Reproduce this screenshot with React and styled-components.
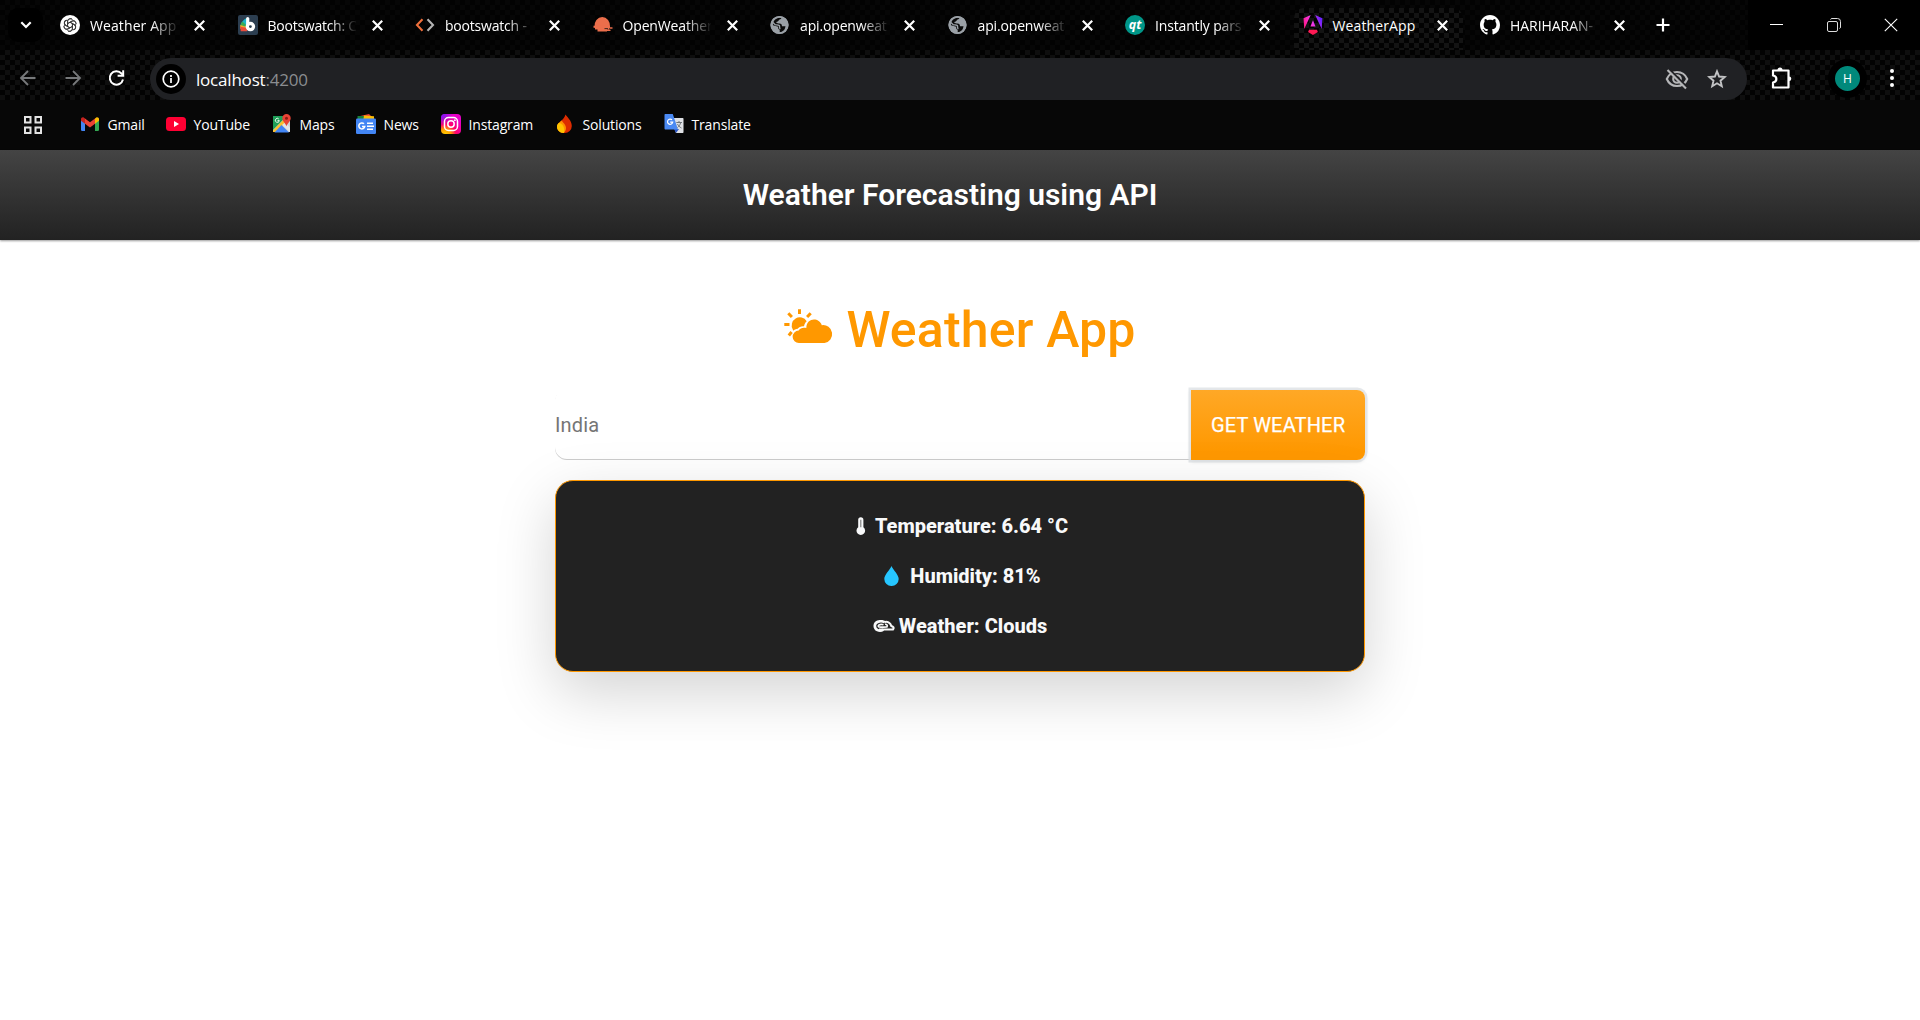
import React from "react";
import styled, { createGlobalStyle, css } from "styled-components";

const Global = createGlobalStyle`
  * { box-sizing: border-box; }
  html, body { margin: 0; padding: 0; background: #fff; }
  body { font-family: Roboto, "Liberation Sans", sans-serif; overflow: hidden; }
`;

const uiFont = css`
  font-family: "Open Sans", "Noto Sans", sans-serif;
`;

const Page = styled.div`
  width: 1920px;
  height: 1020px;
  display: flex;
  flex-direction: column;
  background: #fff;
  overflow: hidden;
`;

const Chrome = styled.header`
  ${uiFont}
  flex: none;
  height: 150px;
  display: flex;
  flex-direction: column;
  background: #070707;
  color: #fff;
`;

const weave = (tone) => css`
  background-color: #020202;
  background-image: conic-gradient(${tone} 25%, transparent 0 50%, ${tone} 0 75%, transparent 0);
  background-size: 10px 10px;
`;

const TabStrip = styled.div`
  height: 50px;
  display: flex;
  align-items: stretch;
  padding-left: 8px;
  ${weave("#060606")}
`;

const TabSearch = styled.div`
  width: 35px;
  height: 34px;
  margin-top: 8px;
  border-radius: 10px;
  background: #000;
  display: flex;
  align-items: center;
  justify-content: center;
`;

const Tabs = styled.div`
  display: flex;
  margin-left: 5px;
  padding-top: 8px;
`;

const Tab = styled.div`
  width: 177.5px;
  height: 42px;
  padding: 0 12px 8px;
  display: flex;
  align-items: center;
  border-radius: 10px 10px 0 0;
  ${(p) => p.$active && css`
    ${weave("#131313")}
    width: 169.5px;
    margin: 0 5px 0 3px;
    padding: 0 9px 8px;
  `}
`;

const Favicon = styled.span`
  flex: none;
  width: 20px;
  height: 20px;
  display: flex;
  svg { width: 20px; height: 20px; display: block; overflow: visible; }
`;

const TabTitle = styled.span`
  flex: none;
  width: 88px;
  margin-left: 10px;
  padding-top: 1px;
  white-space: nowrap;
  font-size: 14px;
  line-height: 20px;
  letter-spacing: ${(p) => p.$track}px;
  ${(p) => p.$fade && css`
    mask-image: linear-gradient(90deg, #000 70%, transparent 102%);
  `}
`;

const CloseMark = styled.span`
  display: flex;
  margin-left: 16px;
`;

const NewTab = styled.div`
  width: 36px;
  margin-left: -1px;
  display: flex;
  align-items: center;
  justify-content: center;
`;

const WindowControls = styled.div`
  margin-left: auto;
  padding-right: 1px;
  display: flex;
  background: #000;
`;

const WindowButton = styled.div`
  width: 57px;
  display: flex;
  align-items: center;
  justify-content: center;
`;

const Toolbar = styled.div`
  height: 50px;
  display: flex;
  align-items: center;
  ${weave("#0e0e0e")}
`;

const NavButtons = styled.div`
  width: 150px;
  padding: 6px 0 0 18px;
  display: flex;
  gap: 24.5px;
`;

const AddressBar = styled.div`
  width: 1597px;
  height: 42px;
  margin-top: 8px;
  padding: 0 20px 0 6px;
  border-radius: 21px;
  background: #202124;
  display: flex;
  align-items: center;
  gap: 18px;
`;

const InfoBadge = styled.div`
  width: 30px;
  height: 30px;
  margin-right: -8px;
  border-radius: 50%;
  background: #000;
  display: flex;
  align-items: center;
  justify-content: center;
`;

const Url = styled.span`
  flex: 1;
  font-size: 17px;
  letter-spacing: -0.2px;
  span { color: #8b8d90; }
`;

const ToolbarActions = styled.div`
  flex: 1;
  padding: 6px 16px 0 23px;
  display: flex;
  align-items: center;
`;

const Avatar = styled.div`
  width: 39px;
  height: 39px;
  margin: 0 13px 0 36px;
  border-radius: 50%;
  border: 7px solid #000;
  background: #00897b;
  color: #fff;
  font-size: 12px;
  display: flex;
  align-items: center;
  justify-content: center;
`;

const Bookmarks = styled.nav`
  height: 50px;
  padding: 0 0 2px 22.5px;
  display: flex;
  align-items: center;
`;

const AppsButton = styled.div`
  width: 57px;
  padding-top: 2px;
  display: flex;
`;

const Bookmark = styled.div`
  width: ${(p) => p.$w}px;
  display: flex;
  align-items: center;
  gap: 8px;
  font-size: 14px;
  letter-spacing: -0.16px;
  white-space: nowrap;
`;

const Navbar = styled.div`
  flex: none;
  height: 90px;
  padding: 0 20px 2px 0;
  display: flex;
  align-items: center;
  justify-content: center;
  background: linear-gradient(#444, #222);
  box-shadow: 0 1px 2px rgba(0, 0, 0, 0.4);
  color: #fff;
  font-size: 30px;
  font-weight: 600;
`;

const Main = styled.main`
  width: 810px;
  margin: 60px auto 0;
  display: flex;
  flex-direction: column;
`;

const Heading = styled.h1`
  margin: 0;
  height: 60px;
  display: flex;
  align-items: center;
  justify-content: center;
  gap: 12px;
  color: #ff9800;
  font-size: 50px;
  font-weight: 500;
  letter-spacing: 0.18px;
  svg { margin-bottom: 7px; }
`;

const SearchRow = styled.div`
  margin-top: 30px;
  height: 70px;
  display: flex;
`;

const CityInput = styled.input`
  flex: 1;
  min-width: 0;
  padding: 0;
  border: 0;
  border-radius: 12px 0 0 12px;
  background: transparent;
  box-shadow: inset 0 -1px 0 #ccc;
  font: 400 20px Roboto, sans-serif;
  letter-spacing: 0.15px;
  color: #666;
  outline: none;
  &::placeholder { color: #757575; opacity: 1; }
`;

const WeatherButton = styled.button`
  width: 174px;
  border: 0;
  padding: 0;
  border-radius: 0 8px 8px 0;
  background: linear-gradient(#ffa826, #ff9800 90%);
  box-shadow: 0 0 0 2.5px rgba(222, 226, 230, 0.8), 0 1px 4px rgba(0, 0, 0, 0.2);
  color: #fff;
  font: 400 20px Roboto, sans-serif;
  letter-spacing: 0.16px;
  -webkit-text-stroke: 0.25px #fff;
`;

const ResultCard = styled.section`
  height: 192px;
  margin-top: 20px;
  padding: 20px;
  border: 1px solid #ff9800;
  border-radius: 18px;
  background: #222;
  box-shadow: 0 20px 60px rgba(0, 0, 0, 0.175);
  color: #f8f9fa;
`;

const Reading = styled.p`
  margin: 0;
  height: 50px;
  padding-left: ${(p) => p.$indent || 0}px;
  display: flex;
  align-items: center;
  justify-content: center;
  gap: ${(p) => p.$gap}px;
  font-size: 20px;
  font-weight: 800;
`;

const CrossIcon = ({ size = 11, width = 2.2 }) => (
  <svg width={size} height={size} viewBox={`0 0 ${size} ${size}`} stroke="#fff" strokeWidth={width}>
    <path d={`M.8 .8L${size - 0.8} ${size - 0.8}M${size - 0.8} .8L.8 ${size - 0.8}`} />
  </svg>
);

const OpenAiIcon = () => (
  <svg viewBox="0 0 20 20" fill="none" stroke="#333" strokeWidth=".9">
    <circle cx="10" cy="10" r="10" fill="#fff" stroke="none" />
    {[0, 60, 120, 180, 240, 300].map((a) => (
      <path key={a} transform={`rotate(${a} 10 10)`} d="M7.6 11.4V6.4c0-3.1 4.2-3.7 5.2-1.1M7.6 8.6l4.2-2.4c1.9-1 4.2.3 4.3 2.4" />
    ))}
  </svg>
);

const BootswatchIcon = () => (
  <svg viewBox="0 0 20 20">
    <rect width="20" height="20" rx="2" fill="#2c3e50" />
    <path d="M9 3v11L2.500 10.500C3.500 6.500 6 4 9 3z" fill="#1cb5c9" />
    <path d="M4.500 6.500l5 5-7.200-.5c.3-1.700 1-3.200 2.200-4.500z" fill="#3aaa55" />
    <path d="M2.300 10l7.500 2.200-4 2.500-3.600-1.200z" fill="#f5a623" />
    <path d="M2.200 11.800L10 13l-1 3.200H2.800z" fill="#e74c3c" />
    <path d="M9.700 3.500v8.500" stroke="#fff" strokeWidth="3.200" strokeLinecap="round" />
    <circle cx="12.400" cy="11.600" r="3.100" fill="#2c3e50" stroke="#fff" strokeWidth="3.300" />
  </svg>
);

const CodeIcon = () => (
  <svg viewBox="0 0 20 20" fill="none" strokeWidth="2.1">
    <path d="M7.500 4.300L2 10l5.500 5.700" stroke="#f0703c" />
    <path d="M12.500 4.300L18 10l-5.500 5.700" stroke="#b4b4b4" />
  </svg>
);

const OpenWeatherIcon = () => (
  <svg viewBox="0 0 20 20" fill="#eb6e4b">
    <path d="M1.500 11.800a7.800 8.800 0 1 1 15.500 0v1H1.500z" />
    <path d="M.500 10.800h16.500v2H.500zM2 12.500h14.500v2H2zM4.500 14.200h9.500v2.300H4.500zM17 12.300h2.500v1.500H17zM13 14.800h4.500v1.200H13z" />
    <path d="M11.500 13.600h3.500" stroke="#111" strokeWidth=".8" />
  </svg>
);

const GlobeIcon = () => (
  <svg viewBox="0 0 20 20">
    <circle cx="9.500" cy="10" r="9" fill="#9aa0a6" />
    <path d="M11.500 2.500c-.2 1.500-1.200 2-2.500 2.300-.5 1.500-1.300 2-2.800 2.300.2 1.400 1.400 1.300 3 1.300 2.500 0 2.500 1 2.800 2.800h3.500c-.5 3-1.500 4.300-3.500 5.500l-2.300.8v-2.800c-1.500-.5-1.600-1.200-1.500-2.900L3 10.200c-.5-3.600 2.500-8 8.500-7.700z" fill="#0a0a0a" />
    <path d="M2.600 7.200l2.600 2.500c1.400.4 3.200-.2 4.100.8.7.9-.3 2.700 1.100 3.400" fill="none" stroke="#9aa0a6" strokeWidth="1.400" />
    <circle cx="9.500" cy="10" r="8.200" fill="none" stroke="#9aa0a6" strokeWidth="1.800" />
  </svg>
);

const QtIcon = () => (
  <svg viewBox="0 0 20 20">
    <circle cx="10" cy="10" r="10" fill="#009688" />
    <text x="10" y="13.800" textAnchor="middle" fill="#fff" fontFamily="Open Sans, sans-serif" fontStyle="italic" fontWeight="700" fontSize="12.500">qt</text>
  </svg>
);

const AngularIcon = () => (
  <svg viewBox="0 0 223 236">
    <defs>
      <linearGradient id="ngBody" gradientUnits="userSpaceOnUse" x1="20" y1="150" x2="215" y2="70">
        <stop offset="0" stopColor="#ff1a8c" />
        <stop offset=".45" stopColor="#f637e3" />
        <stop offset="1" stopColor="#6a22ff" />
      </linearGradient>
    </defs>
    <path d="m222.077 39.192-8.019 125.923L137.387 0zM111.039 62.675l30.357 73.803H80.681zM7.937 165.115 0 39.192 84.690 0z" fill="url(#ngBody)" />
    <path d="m168.972 202.017-57.933 33.056-57.934-33.056 11.783-28.556h92.301z" fill="#ff1a55" />
  </svg>
);

const GithubIcon = () => (
  <svg viewBox="0 0 16 16" fill="#fff">
    <path d="M8 0C3.580 0 0 3.580 0 8c0 3.540 2.290 6.530 5.470 7.590.4.07.55-.17.55-.38 0-.19-.01-.82-.01-1.490-2.010.37-2.530-.49-2.690-.94-.09-.23-.48-.94-.82-1.130-.28-.15-.68-.52-.01-.53.63-.01 1.080.58 1.230.82.72 1.210 1.870.87 2.330.66.07-.52.28-.87.51-1.070-1.780-.2-3.640-.89-3.640-3.950 0-.87.31-1.590.82-2.150-.08-.2-.36-1.020.08-2.120 0 0 .67-.21 2.200.82.64-.18 1.320-.27 2-.27s1.360.09 2 .27c1.530-1.040 2.200-.82 2.200-.82.44 1.100.16 1.920.08 2.120.51.56.82 1.270.82 2.150 0 3.070-1.870 3.750-3.650 3.950.29.25.54.73.54 1.480 0 1.070-.01 1.930-.01 2.200 0 .21.15.46.55.38A8.010 8.010 0 0 0 16 8c0-4.420-3.580-8-8-8z" />
  </svg>
);

const ArrowIcon = ({ flip }) => (
  <svg width="20" height="20" viewBox="0 0 20 20" fill="none" stroke="#77797b" strokeWidth="1.800" transform={flip ? "scale(-1 1)" : undefined}>
    <path d="M17.500 10H3.500M10 3L3 10l7 7" />
  </svg>
);

const ReloadIcon = () => (
  <svg width="20" height="20" viewBox="0 0 20 20" fill="none" stroke="#fff" strokeWidth="2">
    <path d="M16 11.500A6.700 6.700 0 1 1 14.500 5.500L16 7.200" />
    <path d="M16.200 2.200v5.600h-5.600" />
  </svg>
);

const InfoIcon = () => (
  <svg width="18" height="18" viewBox="0 0 18 18" fill="none" stroke="#fff" strokeWidth="1.700">
    <circle cx="9" cy="9" r="7.800" />
    <path d="M9 8v5M9 5v1.900" />
  </svg>
);

const EyeOffIcon = () => (
  <svg width="24" height="24" viewBox="0 0 24 24" fill="none" stroke="#b5b6b8" strokeWidth="2.100">
    <path d="M1.800 12C3.800 7.300 7.700 5 12 5s8.200 2.300 10.200 7c-2 4.700-5.900 7-10.200 7S3.800 16.700 1.800 12z" />
    <circle cx="12" cy="12" r="3.800" />
    <path d="M4.500 2.500l17 17" stroke="#202124" strokeWidth="2" />
    <path d="M2.500 3L21 21.500" />
  </svg>
);

const StarIcon = () => (
  <svg width="20" height="20" viewBox="0 0 20 20" fill="none" stroke="#c2c3c5" strokeWidth="1.900">
    <path d="M10 2.300l2.100 5.200 5.700.5-4.300 3.700 1.300 5.500-4.800-2.900-4.800 2.900 1.300-5.500L2.200 8l5.700-.5z" />
  </svg>
);

const PuzzleIcon = () => (
  <svg width="22" height="24" viewBox="0 0 22 24" fill="none" stroke="#fff" strokeWidth="2.200" strokeLinejoin="round">
    <path d="M3 4.500h15.500v17H3v-5c4.500-.8 4.500-6.200 0-7z" />
    <path d="M7.500 4a2.500 2.500 0 0 1 5 0zM19 10.500a2.300 2.300 0 0 1 0 4.600z" fill="#fff" stroke="none" />
  </svg>
);

const AppsIcon = () => (
  <svg width="20" height="20" viewBox="0 0 20 20" fill="none" stroke="#e3e3e3" strokeWidth="2">
    <path d="M2 2h5.500v5.500H2zM12.500 2H18v5.500h-5.500zM2 12.500h5.500V18H2zM12.500 12.500H18V18h-5.500z" />
  </svg>
);

const GmailIcon = () => (
  <svg viewBox="0 0 20 20">
    <path d="M1 5.500l4 3V17H2.300A1.300 1.300 0 0 1 1 15.700z" fill="#4285f4" />
    <path d="M19 5.500l-4 3V17h2.700a1.300 1.300 0 0 0 1.300-1.300z" fill="#34a853" />
    <path d="M15 4.500l1-.8c1.300-1 3-.1 3 1.400v1.600l-4 3z" fill="#fbbc04" />
    <path d="M5 4.500l-1-.8C2.700 2.700 1 3.600 1 5.100v1.600l4 3z" fill="#c5221f" />
    <path d="M5 4.500l5 3.800 5-3.800v5.200l-5 3.800-5-3.800z" fill="#ea4335" />
  </svg>
);

const YoutubeIcon = () => (
  <svg viewBox="0 0 20 20">
    <rect y="3" width="20" height="14" rx="3.500" fill="#ff0033" />
    <path d="M8 7l5 3-5 3z" fill="#fff" />
  </svg>
);

const MapsIcon = () => (
  <svg viewBox="0 0 20 20">
    <path d="M1 2h17v16H1z" fill="#cfd2d6" />
    <path d="M1 2h14L1 16z" fill="#1e9e57" />
    <path d="M1 16.500L14 3l3 3L4.500 18H1z" fill="#fbc02d" />
    <path d="M2.500 18.500L9.500 11l7.500 7.500z" fill="#4285f4" />
    <path d="M10 11l3-2.500 5 5V18z" fill="#e3e5e8" />
    <path d="M6.800 5a2 2 0 1 0 .5 1.600H5.500" fill="none" stroke="#fff" strokeWidth=".9" />
    <path d="M14.500 0a4.200 4.200 0 0 1 4.200 4.200c0 3-3 4.500-4.200 8-1.200-3.500-4.200-5-4.200-8A4.200 4.200 0 0 1 14.500 0z" fill="#e94335" />
    <circle cx="14.500" cy="4.300" r="1.500" fill="#8c1a12" />
  </svg>
);

const NewsIcon = () => (
  <svg viewBox="0 0 20 20">
    <path d="M2 2.500L13 0l4 4v3H2z" fill="#ea4335" />
    <path d="M1.500 2h8L8 7H1.500z" fill="#188038" />
    <path d="M8 1.500l10 .8V8H7z" fill="#fbbc04" />
    <rect y="4.500" width="20" height="15.500" rx="1.200" fill="#4285f4" />
    <path d="M8 9.800a3 3 0 1 0 .8 2.600H6" fill="none" stroke="#fff" strokeWidth="1.500" />
    <path d="M11 9.200h6M11 12.200h7M11 15.200h6" stroke="#fff" strokeWidth="1.600" />
  </svg>
);

const InstagramIcon = () => (
  <svg viewBox="0 0 20 20" fill="none" stroke="#fff" strokeWidth="1.500">
    <defs>
      <radialGradient id="igWarm" cx=".2" cy="1.050" r="1">
        <stop offset="0" stopColor="#ffd600" />
        <stop offset=".3" stopColor="#ff9d00" />
        <stop offset=".55" stopColor="#ff0169" />
        <stop offset="1" stopColor="#e900c8" />
      </radialGradient>
      <radialGradient id="igCool" cx="0" cy="0" r=".6">
        <stop offset="0" stopColor="#6a1bff" />
        <stop offset="1" stopColor="#6a1bff" stopOpacity="0" />
      </radialGradient>
    </defs>
    <rect width="20" height="20" rx="4" fill="url(#igWarm)" stroke="none" />
    <rect width="20" height="20" rx="4" fill="url(#igCool)" stroke="none" />
    <rect x="3.500" y="3.500" width="13" height="13" rx="4" />
    <circle cx="10" cy="10" r="3.200" />
    <circle cx="13.900" cy="6.200" r=".9" fill="#fff" stroke="none" />
  </svg>
);

const SolutionsIcon = () => (
  <svg viewBox="0 0 20 20">
    <path d="M10.500.500c1.500 2.500 6.300 6 6.300 11.500A7 7 0 0 1 9.500 19C5 19 2 16 2.300 12 2.600 8.500 9 6 10.500.500z" fill="#dd2c00" />
    <path d="M6.500 6.500c1.500 2.200 4.500 4 4.500 7.500 0 2.300-1 4-2.500 5C4.500 18.800 2 16 2 12.500 2 10 4.500 8.900 6.500 6.500z" fill="#ff9100" />
    <path d="M4 8.800c3.500 1.200 6 4 5 10.200-4.500-.2-7-3-7-6.500 0-1.500.8-2.600 2-3.700z" fill="#ffc400" />
  </svg>
);

const TranslateIcon = () => (
  <svg viewBox="0 0 20 20">
    <path d="M7 4h11.500c.6 0 1 .4 1 1v13c0 .6-.4 1-1 1H12z" fill="#dfe1e5" />
    <path d="M10 15h5l-3 4z" fill="#2a56c6" />
    <path d="M1.500 0h7.300L14 15.500H1.500C.9 15.500.5 15 .5 14.500V1c0-.6.4-1 1-1z" fill="#4a89f3" />
    <path d="M8 5.900a2.600 2.600 0 1 0 .7 2.200H6.200" fill="none" stroke="#fff" strokeWidth="1.200" />
    <path d="M12.300 8.500H18M15 7v1.500M16.700 8.500c-.5 2.500-2 4-3.200 5M13.500 10c.8 1.700 2 3 4 4" fill="none" stroke="#70757a" strokeWidth="1" />
  </svg>
);

const SunCloudIcon = () => (
  <svg width="50" height="36" viewBox="0 0 50 36" fill="#ff9800">
    <g stroke="#ff9800" strokeWidth="3">
      <path d="M15.500 .300v4.700M4.300 4.300l3.600 3.700M26.700 4.300l-3.600 3.700M.300 15.500h5.200M4.800 26.500l2.800-3.500" />
    </g>
    <path d="M8.800 20.500A7.800 7.800 0 1 1 22.700 12.300C21.200 13.700 20.400 15.200 20 17.300c-3-.3-5 .8-6.300 2.500-2 .2-3.500.9-4.500 2z" />
    <path d="M15 34a6.200 6.200 0 0 1-.3-12.400c1.500-2.600 4-3.200 7.600-2.600.2-10.500 12.700-10.900 15.500-2.800a9 9 0 1 1 2.700 17.800z" />
  </svg>
);

const ThermometerIcon = () => (
  <svg width="10" height="18" viewBox="0 0 10 18">
    <path d="M2.200 2.800a2.600 2.600 0 0 1 5.200 0v7.400a4.300 4.300 0 1 1-5.200 0z" fill="#f8f9fa" />
    <path d="M4.800 2.800v7.500" stroke="#777" strokeWidth="1.100" />
  </svg>
);

const DropIcon = () => (
  <svg width="15" height="20" viewBox="0 0 15 20">
    <path d="M7.500 0C9 4 14.700 8.500 14.700 13A7.100 7.100 0 0 1 7.500 20 7.100 7.100 0 0 1 .3 13C.3 8.500 6 4 7.500 0z" fill="#26c6ff" />
  </svg>
);

const BreezeIcon = () => (
  <svg width="22" height="13" viewBox="0 0 22 13" fill="none" stroke="#f8f9fa" strokeWidth="1.700">
    <path d="M6 9.500h14c1.300-1.800.300-3-1.700-3.600C17.500 2.500 14 1 11.200 2.200" strokeWidth="2.100" />
    <path d="M11.500 2.200C8 .2 2 1.500 1.800 5.700c0 4 4.500 6.500 8.500 4" strokeWidth="2.700" />
    <path d="M10.500 4.800C8 4 5.500 4.700 5.300 6c0 1.500 3.500 1.200 8.700.8.800-1.800-.5-2.800-2-2.500" />
  </svg>
);

const TABS = [
  { title: "Weather App", icon: <OpenAiIcon />, track: 0.1, fade: true },
  { title: "Bootswatch: C", icon: <BootswatchIcon />, track: -0.25, fade: true },
  { title: "bootswatch - ", icon: <CodeIcon />, track: -0.2, fade: true },
  { title: "OpenWeather", icon: <OpenWeatherIcon />, track: -0.15, fade: true },
  { title: "api.openweat", icon: <GlobeIcon />, track: -0.15, fade: true },
  { title: "api.openweat", icon: <GlobeIcon />, track: -0.15, fade: true },
  { title: "Instantly pars", icon: <QtIcon />, track: -0.15, fade: true },
  { title: "WeatherApp", icon: <AngularIcon />, track: 0.12, active: true },
  { title: "HARIHARAN-", icon: <GithubIcon />, track: -0.05, fade: true },
];

const BOOKMARKS = [
  { label: "Gmail", w: 86, icon: <GmailIcon /> },
  { label: "YouTube", w: 106, icon: <YoutubeIcon /> },
  { label: "Maps", w: 84, icon: <MapsIcon /> },
  { label: "News", w: 85, icon: <NewsIcon /> },
  { label: "Instagram", w: 114, icon: <InstagramIcon /> },
  { label: "Solutions", w: 109, icon: <SolutionsIcon /> },
  { label: "Translate", w: 110, icon: <TranslateIcon /> },
];

export default function App() {
  return (
    <Page>
      <Global />
      <Chrome>
        <TabStrip>
          <TabSearch>
            <svg width="12" height="8" viewBox="0 0 12 8" fill="none" stroke="#fff" strokeWidth="2.200">
              <path d="M1.300 1.300L6 6l4.700-4.700" />
            </svg>
          </TabSearch>
          <Tabs>
            {TABS.map((t, i) => (
              <Tab key={i} $active={t.active}>
                <Favicon>{t.icon}</Favicon>
                <TabTitle $fade={t.fade} $track={t.track}>{t.title}</TabTitle>
                <CloseMark><CrossIcon /></CloseMark>
              </Tab>
            ))}
          </Tabs>
          <NewTab>
            <svg width="14" height="14" viewBox="0 0 14 14" stroke="#fff" strokeWidth="2.200">
              <path d="M7 .500v13M.500 7h13" />
            </svg>
          </NewTab>
          <WindowControls>
            <WindowButton>
              <svg width="13" height="2" viewBox="0 0 13 2"><path d="M0 0h13v1H0z" fill="#fff" /></svg>
            </WindowButton>
            <WindowButton>
              <svg width="14" height="14" viewBox="0 0 14 14" fill="none" stroke="#ddd">
                <rect x=".5" y="3.500" width="10" height="10" rx="1.500" />
                <path d="M3.500 1.500c.3-.7.800-1 1.500-1h5.500a3 3 0 0 1 3 3V9c0 .8-.3 1.300-1 1.500" />
              </svg>
            </WindowButton>
            <WindowButton><CrossIcon size={14} width={1.1} /></WindowButton>
          </WindowControls>
        </TabStrip>
        <Toolbar>
          <NavButtons>
            <ArrowIcon />
            <ArrowIcon flip />
            <ReloadIcon />
          </NavButtons>
          <AddressBar>
            <InfoBadge><InfoIcon /></InfoBadge>
            <Url>localhost<span>:4200</span></Url>
            <EyeOffIcon />
            <StarIcon />
          </AddressBar>
          <ToolbarActions>
            <PuzzleIcon />
            <Avatar>H</Avatar>
            <svg width="24" height="20" viewBox="0 0 24 20" fill="#fff">
              <circle cx="12" cy="3" r="2" /><circle cx="12" cy="10" r="2" /><circle cx="12" cy="17" r="2" />
            </svg>
          </ToolbarActions>
        </Toolbar>
        <Bookmarks>
          <AppsButton><AppsIcon /></AppsButton>
          {BOOKMARKS.map((b) => (
            <Bookmark key={b.label} $w={b.w}>
              <Favicon>{b.icon}</Favicon>
              {b.label}
            </Bookmark>
          ))}
        </Bookmarks>
      </Chrome>
      <Navbar>Weather Forecasting using API</Navbar>
      <Main>
        <Heading><SunCloudIcon />Weather App</Heading>
        <SearchRow>
          <CityInput placeholder="India" />
          <WeatherButton>GET WEATHER</WeatherButton>
        </SearchRow>
        <ResultCard>
          <Reading $gap={9} $indent={4}><ThermometerIcon />Temperature: 6.64 °C</Reading>
          <Reading $gap={11} $indent={5}><DropIcon />Humidity: 81%</Reading>
          <Reading $gap={4}><BreezeIcon />Weather: Clouds</Reading>
        </ResultCard>
      </Main>
    </Page>
  );
}
